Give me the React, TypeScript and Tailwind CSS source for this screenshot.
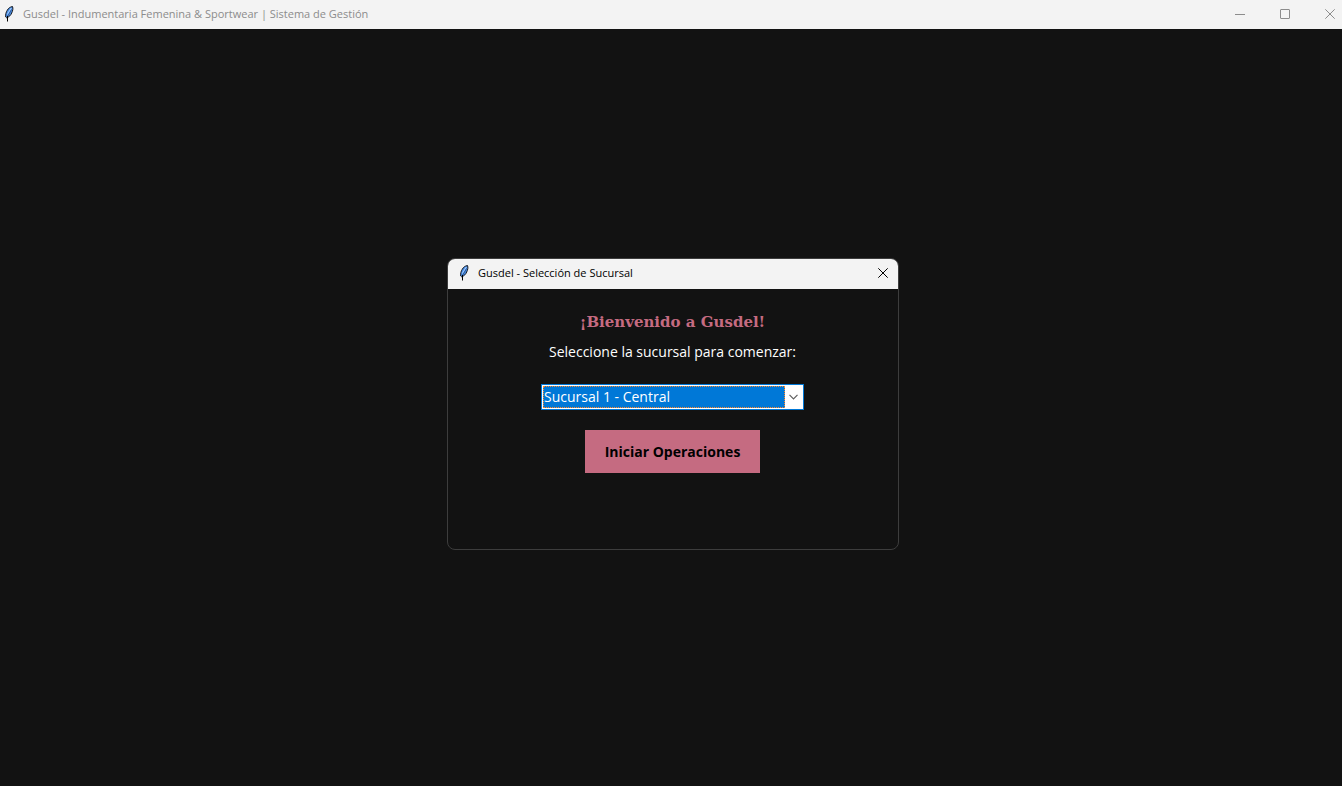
import { useState } from "react";

const branches = ["Sucursal 1 - Central", "Sucursal 2", "Sucursal 3"];

function FeatherIcon() {
  return (
    <svg width="16" height="16" viewBox="0 0 16 16" aria-hidden="true">
      <path
        d="M11.500.5C9 1 7.300 2.300 6.300 4.200 5 6.300 4.400 8.300 4.700 11l1 .8C8.300 10.800 9.800 9.200 10.700 7 11.800 4.700 12.300 2.500 11.500.5Z"
        fill="#4a8fe8"
        stroke="#15181e"
        strokeWidth="1"
      />
      <path d="M10.300 2 6.300 8.500" stroke="#9cc8ff" strokeWidth="1.200" />
      <path d="M10.500 3.500 6.200 11" stroke="#1f3f70" strokeWidth=".7" />
      <path d="M6.500 10v5.500" stroke="#000" />
    </svg>
  );
}

function CloseIcon() {
  return (
    <svg width="10" height="10" viewBox="0 0 10 10" fill="none" stroke="currentColor" aria-hidden="true">
      <path d="m.3.3 9.400 9.400M9.700.3.3 9.700" />
    </svg>
  );
}

function MainTitleBar() {
  return (
    <header className="flex h-[29px] shrink-0 items-center bg-[#f3f3f3] pb-0.5 pl-px text-[#8c8c8c]">
      <FeatherIcon />
      <h1 className="ml-1.5 flex-1 truncate text-[11px] leading-4">
        Gusdel - Indumentaria Femenina &amp; Sportwear | Sistema de Gestión
      </h1>
      <div className="flex gap-[35px] pr-[7px]">
        <button type="button" aria-label="Minimizar">
          <svg width="10" height="10" viewBox="0 0 10 10" stroke="currentColor" aria-hidden="true">
            <path d="M0 5.500h10" />
          </svg>
        </button>
        <button type="button" aria-label="Maximizar">
          <svg width="10" height="10" viewBox="0 0 10 10" fill="none" stroke="currentColor" aria-hidden="true">
            <rect x=".5" y=".5" width="9" height="9" rx=".5" />
          </svg>
        </button>
        <button type="button" aria-label="Cerrar">
          <CloseIcon />
        </button>
      </div>
    </header>
  );
}

function BranchDialog() {
  const [branch, setBranch] = useState(branches[0]);

  return (
    <section
      role="dialog"
      aria-labelledby="dialog-title"
      className="w-[452px] overflow-hidden rounded-lg border border-[#3d3d3d] bg-[#121212]"
    >
      <header className="flex h-[30px] items-center bg-[#f3f3f3] pr-[10px] pb-0.5 pl-2 text-black">
        <FeatherIcon />
        <h2 id="dialog-title" className="ml-1.5 flex-1 text-[11px] leading-4">
          Gusdel - Selección de Sucursal
        </h2>
        <button type="button" aria-label="Cerrar">
          <CloseIcon />
        </button>
      </header>

      <form className="flex h-[260px] flex-col items-center pt-5 pr-px" onSubmit={(e) => e.preventDefault()}>
        <p className="font-['DejaVu_Serif',serif] text-[15px] leading-[26px] font-bold text-[#c56b81]">
          ¡Bienvenido a Gusdel!
        </p>
        <label htmlFor="branch" className="mt-1 text-[14px] leading-[26px] text-white">
          Seleccione la sucursal para comenzar:
        </label>

        <div className="mt-[19px] flex h-[26px] w-[263px] border border-[#0078d7] bg-white p-px">
          <select
            id="branch"
            value={branch}
            onChange={(e) => setBranch(e.target.value)}
            className="min-w-0 flex-1 appearance-none border border-dotted border-[#ff8728] bg-[#0078d7] text-[14px] leading-5 text-white outline-none"
          >
            {branches.map((name) => (
              <option key={name}>{name}</option>
            ))}
          </select>
          <span className="pointer-events-none flex w-[17px] items-center justify-center text-[#606060]">
            <svg width="9" height="6" viewBox="0 0 9 6" fill="none" stroke="currentColor" strokeWidth="1.200" aria-hidden="true">
              <path d="m.5.9 4 4 4-4" />
            </svg>
          </span>
        </div>

        <button
          type="submit"
          className="mt-5 h-[43px] w-[175px] bg-[#c56b81] text-[14px] leading-5 font-bold text-black"
        >
          Iniciar Operaciones
        </button>
      </form>
    </section>
  );
}

export default function App() {
  return (
    <div className="flex min-h-screen flex-col bg-[#121212] font-['Open_Sans','Noto_Sans',sans-serif]">
      <MainTitleBar />
      <main className="flex flex-1 items-center justify-center pb-[7px] pl-1">
        <BranchDialog />
      </main>
    </div>
  );
}
